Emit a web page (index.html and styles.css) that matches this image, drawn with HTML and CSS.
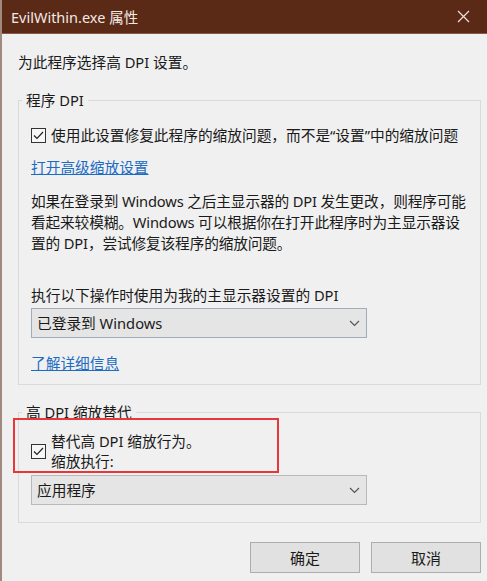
FILE: index.html
```html
<!DOCTYPE html>
<html lang="zh-CN">
<head>
  <meta charset="UTF-8" />
  <title>EvilWithin.exe 属性</title>
  <link rel="stylesheet" href="styles.css">
</head>
<body>
  <div class="window">
    <div class="titlebar">
      <span class="title">EvilWithin.exe 属性</span>
      <svg class="close" width="13" height="13" viewBox="0 0 13 13">
        <path d="M1 1 L12 12 M12 1 L1 12" stroke="#e8ddd8" stroke-width="1.3" fill="none"/>
      </svg>
    </div>

    <div class="content">
      <p class="intro">为此程序选择高 DPI 设置。</p>

      <fieldset class="group group-dpi">
        <legend>程序 DPI</legend>
        <div class="check-row">
          <span class="checkbox">
            <svg width="15" height="15" viewBox="0 0 15 15">
              <rect x="0.5" y="0.5" width="14" height="14" fill="#f7f7f7" stroke="#333"/>
              <path d="M3 7.5 L6 10.5 L12 4" stroke="#222" stroke-width="1.2" fill="none"/>
            </svg>
          </span>
          <span>使用此设置修复此程序的缩放问题，而不是“设置”中的缩放问题</span>
        </div>
        <a class="link link-open" href="#">打开高级缩放设置</a>
        <p class="desc">如果在登录到 Windows 之后主显示器的 DPI 发生更改，则程序可能<br>看起来较模糊。Windows 可以根据你在打开此程序时为主显示器设<br>置的 DPI，尝试修复该程序的缩放问题。</p>
        <p class="select-label">执行以下操作时使用为我的主显示器设置的 DPI</p>
        <div class="select">
          <span>已登录到 Windows</span>
          <svg width="11" height="7" viewBox="0 0 11 7">
            <path d="M1 1 L5.5 5.5 L10 1" stroke="#555" stroke-width="1.2" fill="none"/>
          </svg>
        </div>
        <a class="link link-more" href="#">了解详细信息</a>
      </fieldset>

      <fieldset class="group group-override">
        <legend>高 DPI 缩放替代</legend>
        <div class="check-row highlighted">
          <span class="checkbox">
            <svg width="15" height="15" viewBox="0 0 15 15">
              <rect x="0.5" y="0.5" width="14" height="14" fill="#f7f7f7" stroke="#333"/>
              <path d="M3 7.5 L6 10.5 L12 4" stroke="#222" stroke-width="1.2" fill="none"/>
            </svg>
          </span>
          <span>替代高 DPI 缩放行为。<br>缩放执行:</span>
        </div>
        <div class="select select-app">
          <span>应用程序</span>
          <svg width="11" height="7" viewBox="0 0 11 7">
            <path d="M1 1 L5.5 5.5 L10 1" stroke="#555" stroke-width="1.2" fill="none"/>
          </svg>
        </div>
      </fieldset>

      <div class="buttons">
        <button type="button">确定</button>
        <button type="button">取消</button>
      </div>
    </div>
  </div>
</body>
</html>
```

FILE: styles.css
```css
html, body {
  margin: 0;
  height: 100%;
}
body {
  background: #f0f0f0;
  color: #1a1a1a;
  font-family: "Noto Sans", "Noto Sans CJK SC", sans-serif;
  font-size: 14.7px;
  line-height: 20px;
  overflow: hidden;
}
.window {
  min-height: 100%;
  border-left: 2px solid #a08a80;
  box-sizing: border-box;
}
.titlebar {
  height: 34px;
  background: #5b2a17;
  display: flex;
  align-items: center;
  justify-content: space-between;
  padding: 0 17px 0 9px;
  border-bottom: 1px solid #8a5a48;
  box-sizing: border-box;
}
.title {
  color: #f1e9e4;
  font-size: 14.5px;
}
.content {
  padding: 18px 6px 0 16px;
}
.intro {
  margin: 0;
}
.group {
  margin: 0;
  border: 1px solid #dadada;
  padding: 0 12px;
  min-width: 0;
}
.group legend {
  padding: 0 4px;
  margin-left: -9px;
}
.group-dpi {
  margin-top: 18px;
  padding-top: 15px;
  padding-bottom: 11px;
}
.group-override {
  margin-top: 17px;
  padding-top: 9px;
  padding-bottom: 17px;
}
.check-row {
  display: flex;
  align-items: center;
  gap: 5px;
  white-space: nowrap;
}
.checkbox {
  display: flex;
  width: 15px;
  height: 15px;
}
.highlighted {
  position: relative;
}
.highlighted::after {
  content: "";
  position: absolute;
  left: -18px;
  top: -13px;
  width: 262px;
  height: 51px;
  border: 2px solid #e8373a;
}
.link {
  display: block;
  color: #1c6cc4;
  text-decoration: underline;
  width: max-content;
}
.link-open {
  margin-top: 12px;
}
.desc {
  margin: 14px 0 0;
  line-height: 21px;
  white-space: nowrap;
  letter-spacing: -0.15px;
}
.select-label {
  margin: 31px 0 0;
}
.select {
  margin-top: 3px;
  width: 336px;
  height: 30px;
  box-sizing: border-box;
  background: #e5e5e5;
  border: 1px solid #a2acb8;
  display: flex;
  align-items: center;
  justify-content: space-between;
  padding: 0 6px 0 5px;
}
.select-app {
  margin-top: 4px;
  border-color: #b9b9b9;
}
.link-more {
  margin-top: 15px;
}
.buttons {
  display: flex;
  justify-content: flex-end;
  gap: 11px;
  margin-top: 19px;
}
button {
  width: 110px;
  height: 31px;
  background: #e1e1e1;
  border: 1px solid #adadad;
  font-family: inherit;
  font-size: 15px;
  color: #1a1a1a;
}
```
